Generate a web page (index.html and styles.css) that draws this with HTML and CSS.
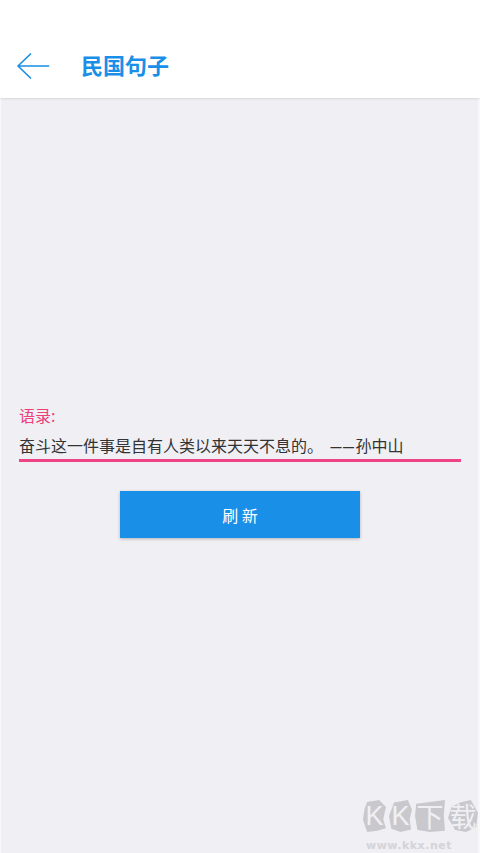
FILE: index.html
```html
<!DOCTYPE html>
<html lang="zh-CN">
<head>
  <meta charset="UTF-8">
  <meta name="viewport" content="width=device-width, initial-scale=1.0">
  <title>民国句子</title>
  <link rel="stylesheet" href="styles.css">
</head>
<body>

  <!-- 顶部标题栏 -->
  <div class="header">
    <svg class="back-icon" width="34" height="28" viewBox="0 0 34 28">
      <path d="M14.5 2 L2 14 L14.5 26 M2 14 H32.5" fill="none" stroke="#1a8fe8" stroke-width="1.7" stroke-linecap="round" stroke-linejoin="round"/>
    </svg>
    <h1 class="title">民国句子</h1>
  </div>

  <!-- 语录 -->
  <div class="main">
    <div class="label">语录:</div>
    <div class="quote">奋斗这一件事是自有人类以来天天不息的。 <span class="dash">——</span>孙中山</div>
    <button class="refresh" type="button">刷 新</button>
  </div>

  <!-- 水印 -->
  <div class="watermark">
    <div class="wm-logo">
      <span class="wm-k wm-a">K</span>
      <span class="wm-k wm-b">K</span>
      <span class="wm-cn wm-c">下</span>
      <span class="wm-cn wm-d">载</span>
    </div>
    <div class="wm-url">www.kkx.net</div>
  </div>

</body>
</html>
```

FILE: styles.css
```css
body {
  margin: 0;
  height: 853px;
  overflow: hidden;
  display: flex;
  flex-direction: column;
  background-color: #f8f8fb;
  font-family: "Noto Sans CJK SC", "Noto Sans", sans-serif;
  position: relative;
}

/* 标题栏 */
.header {
  height: 98px;
  box-sizing: border-box;
  padding: 30px 0 0 16px;
  display: flex;
  align-items: center;
  background-color: #fff;
  box-shadow: 0 1px 2px rgba(0, 0, 0, 0.1);
  position: relative;
}

.back-icon {
  flex-shrink: 0;
  margin-top: 4px;
}

.title {
  margin: 0 0 0 31px;
  font-size: 22px;
  font-weight: 700;
  line-height: 30px;
  color: #1a8fe8;
}

/* 主体 */
.main {
  flex: 1;
  margin: 0 2px 0 1px;
  padding: 305px 17px 0 18px;
  display: flex;
  flex-direction: column;
  background-color: #efeff4;
}

.label {
  font-size: 16px;
  line-height: 24px;
  color: #ec407a;
}

.quote {
  height: 26px;
  margin-top: 6px;
  font-size: 16px;
  line-height: 24px;
  color: #333;
  white-space: pre;
  border-bottom: 3px solid #ee4485;
}

.dash {
  font-family: "Liberation Sans", sans-serif;
  font-size: 11px;
  font-weight: 700;
  letter-spacing: 1.5px;
  margin-left: 4px;
  vertical-align: 1px;
}

.refresh {
  align-self: center;
  width: 240px;
  height: 47px;
  margin-top: 29px;
  padding: 0;
  border: none;
  background-color: #1a8fe8;
  color: #fff;
  font-family: inherit;
  font-size: 16px;
  box-shadow: 0 1px 3px rgba(0, 0, 0, 0.25);
}

/* 水印 */
.watermark {
  position: absolute;
  left: 363px;
  top: 800px;
  width: 116px;
}

.wm-logo {
  display: flex;
  gap: 3px;
}

.wm-k,
.wm-cn {
  height: 32px;
  background-color: #c9c9cd;
  color: #f0f0f4;
  line-height: 32px;
  text-align: center;
}

.wm-k {
  width: 23px;
  font-family: "Liberation Sans", sans-serif;
  font-size: 27px;
}

.wm-cn {
  width: 30px;
  font-size: 27px;
}

.wm-a {
  clip-path: polygon(18% 6%, 70% 0, 100% 22%, 88% 60%, 100% 88%, 62% 96%, 18% 100%, 0 62%, 6% 30%);
}

.wm-b {
  clip-path: polygon(22% 8%, 82% 0, 100% 30%, 90% 62%, 96% 92%, 50% 100%, 10% 90%, 0 50%);
}

.wm-c {
  clip-path: polygon(4% 12%, 50% 6%, 100% 0, 96% 50%, 100% 96%, 50% 100%, 8% 94%, 0 50%);
}

.wm-d {
  clip-path: polygon(12% 22%, 40% 8%, 76% 0, 100% 40%, 94% 84%, 60% 100%, 24% 94%, 0 56%);
}

.wm-url {
  width: 92px;
  margin-top: 7px;
  font-family: "DejaVu Sans", sans-serif;
  font-size: 11px;
  line-height: 13px;
  font-weight: 700;
  letter-spacing: 0.5px;
  text-align: center;
  color: #d4d4d8;
}
```
